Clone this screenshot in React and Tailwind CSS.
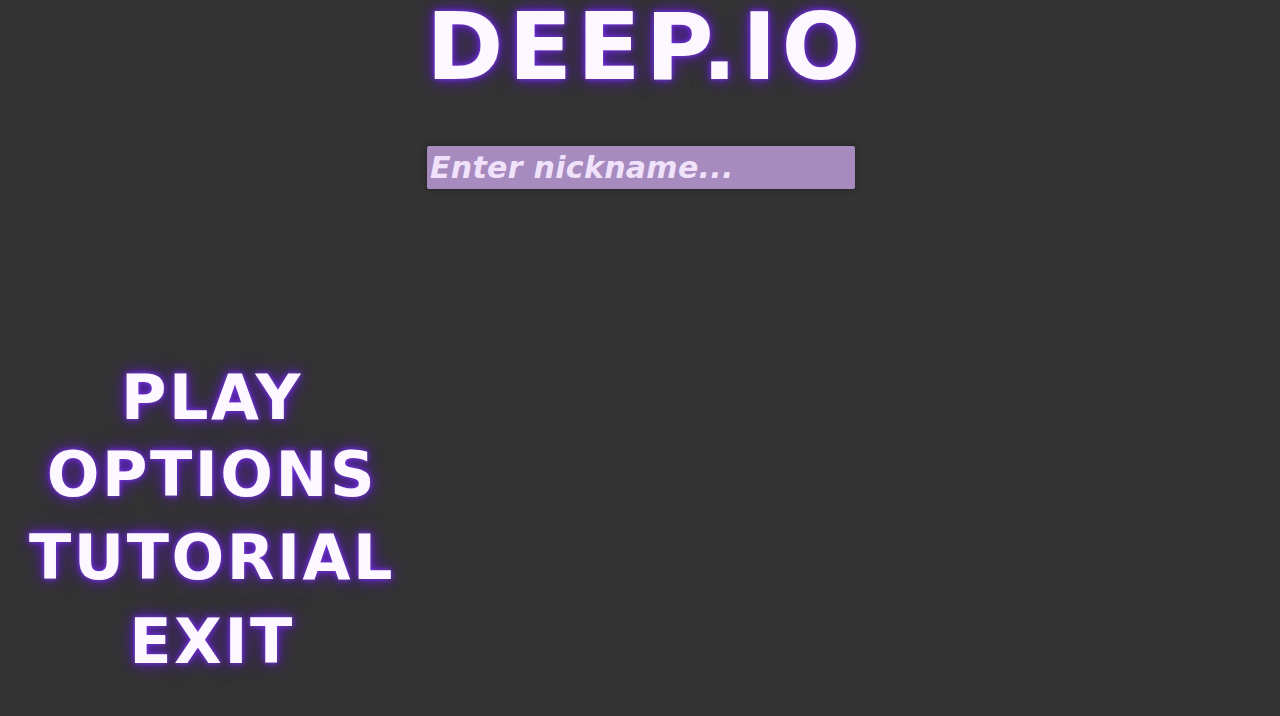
const glow =
  "[text-shadow:0_0_5px_#7c3aed,0_0_12px_#5b21b6,0_0_20px_#4c1d95]";

const menuItems = [
  { label: "PLAY", gap: "mt-0" },
  { label: "OPTIONS", gap: "mt-[15px]" },
  { label: "TUTORIAL", gap: "mt-[21px]" },
  { label: "EXIT", gap: "mt-[22px]" },
];

const App = () => {
  return (
    <div className="w-full h-[716px] bg-[#333333] overflow-hidden font-['DejaVu_Sans','Liberation_Sans',sans-serif] text-white">
      {/* TITLE + NICKNAME */}
      <div className="flex flex-col items-center pt-[1px] pl-[12px]">
        <h1
          className={`text-[93px] leading-none font-bold tracking-[5px] text-[#fdf8ff] ${glow}`}
        >
          DEEP.IO
        </h1>

        <input
          placeholder="Enter nickname..."
          className="mt-[52px] ml-[-10px] w-[428px] h-[43px] rounded-[2px] bg-[#a78bbf] px-[3px] text-[30px] font-bold italic tracking-[0.3px] text-[#f3e8ff] placeholder:text-[#f0e2fb] outline-none shadow-[0_0_6px_rgba(0,0,0,0.35)]"
        />
      </div>

      {/* MENU */}
      <div className="mt-[178px] w-[424px] flex flex-col items-center">
        {menuItems.map((m) => (
          <button
            key={m.label}
            className={`${m.gap} text-[62px] leading-none font-bold tracking-[2.5px] text-[#fdf8ff] ${glow}`}
          >
            {m.label}
          </button>
        ))}
      </div>
    </div>
  );
};

export default App;
